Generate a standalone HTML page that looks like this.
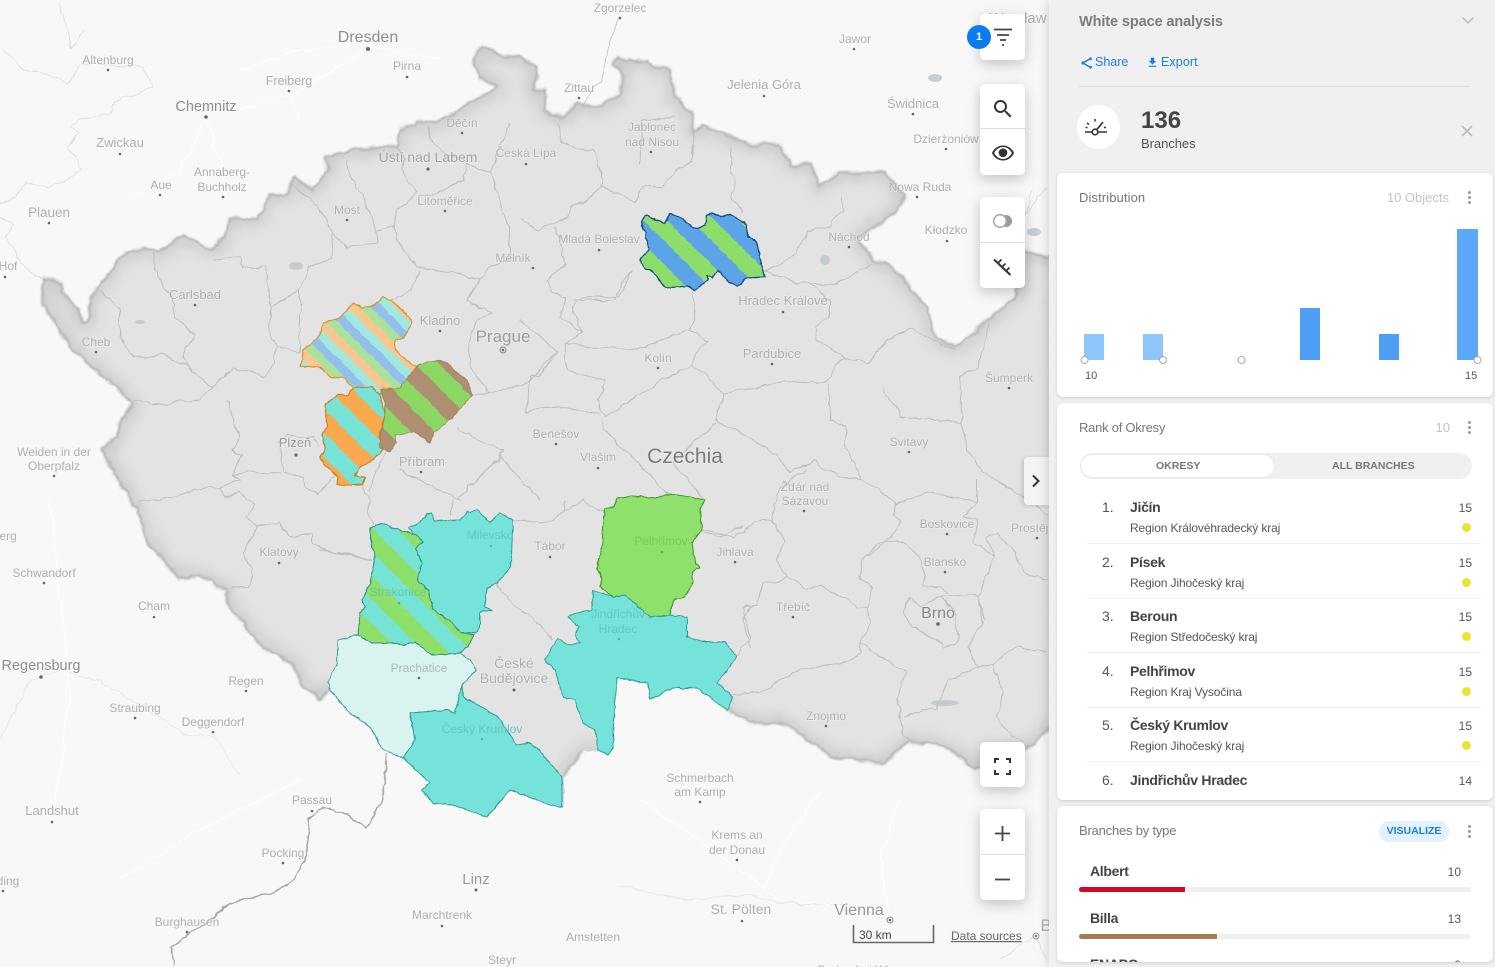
<!DOCTYPE html>
<html><head><meta charset="utf-8"><title>White space analysis</title>
<style>
html,body{margin:0;padding:0;width:1495px;height:967px;overflow:hidden;background:#f8f8f8;font-family:"Liberation Sans",sans-serif}
#map{position:absolute;left:0;top:0}
#map text.l{font-family:"Liberation Sans",sans-serif;fill:#aeaeae;font-size:12px;text-anchor:middle;paint-order:stroke;stroke:rgba(255,255,255,.35);stroke-width:1.5px}
#map circle.d{fill:#666}
.card{position:absolute;background:#fff;border-radius:5px;box-shadow:0 4px 14px rgba(0,0,0,.22)}
.div{position:absolute;left:0;right:0;height:1px;background:#ddd}
.ic{position:absolute}
#panel{position:absolute;left:1049px;top:0;width:446px;height:967px;background:#f0f0f0;box-shadow:-3px 0 8px rgba(0,0,0,.12);overflow:hidden}
#panel .t{position:absolute;white-space:nowrap}
.pc{position:absolute;left:8px;width:436px;background:#fff;border-radius:6px;box-shadow:0 1px 3px rgba(0,0,0,.15);overflow:hidden}
.h{color:#777;font-size:13px;letter-spacing:-.1px}
.num{font-size:14px;color:#555}
.name{font-weight:bold;font-size:14px;color:#444;letter-spacing:-.3px}
.sub{font-size:12px;color:#555;letter-spacing:-.12px}
.val{font-size:12px;color:#555;text-align:right}
.dot{position:absolute;width:9px;height:9px;border-radius:50%;background:#ece52f}
.sep{position:absolute;left:30px;width:394px;height:1px;background:#efefef}
.vd{position:absolute;width:3px;height:3px;border-radius:50%;background:#999;box-shadow:0 5px 0 #999,0 -5px 0 #999}
</style></head><body>
<svg id="map" width="1060" height="967" viewBox="0 0 1060 967">
<defs>
<linearGradient id="gJ" gradientUnits="userSpaceOnUse" x1="647" y1="200" x2="670.75" y2="176.25" spreadMethod="repeat"><stop offset="0" stop-color="#5ba3e8"/><stop offset=".5" stop-color="#5ba3e8"/><stop offset=".5" stop-color="#8ddd6b"/><stop offset="1" stop-color="#8ddd6b"/></linearGradient>
<linearGradient id="gR" gradientUnits="userSpaceOnUse" x1="315.7" y1="300" x2="339.7" y2="276" spreadMethod="repeat"><stop offset="0" stop-color="#93bfed"/><stop offset=".25" stop-color="#93bfed"/><stop offset=".25" stop-color="#a1e8e0"/><stop offset=".5" stop-color="#a1e8e0"/><stop offset=".5" stop-color="#f9c78d"/><stop offset=".75" stop-color="#f9c78d"/><stop offset=".75" stop-color="#a9e39b"/><stop offset="1" stop-color="#a9e39b"/></linearGradient>
<linearGradient id="gB" gradientUnits="userSpaceOnUse" x1="303" y1="300" x2="327" y2="276" spreadMethod="repeat"><stop offset="0" stop-color="#8bd964"/><stop offset=".5" stop-color="#8bd964"/><stop offset=".5" stop-color="#ae8f71"/><stop offset="1" stop-color="#ae8f71"/></linearGradient>
<linearGradient id="gP" gradientUnits="userSpaceOnUse" x1="300" y1="360.7" x2="324" y2="336.7" spreadMethod="repeat"><stop offset="0" stop-color="#f9aa50"/><stop offset=".5" stop-color="#f9aa50"/><stop offset=".5" stop-color="#75e3d6"/><stop offset="1" stop-color="#75e3d6"/></linearGradient>
<linearGradient id="gS" gradientUnits="userSpaceOnUse" x1="300" y1="504" x2="324" y2="480" spreadMethod="repeat"><stop offset="0" stop-color="#75e3d6"/><stop offset=".5" stop-color="#75e3d6"/><stop offset=".5" stop-color="#8ee06a"/><stop offset="1" stop-color="#8ee06a"/></linearGradient>
<filter id="bl" x="-5%" y="-5%" width="110%" height="110%"><feGaussianBlur stdDeviation="7"/></filter>
<filter id="bs" x="-5%" y="-5%" width="110%" height="110%"><feGaussianBlur stdDeviation="1"/></filter>
<filter id="wig" filterUnits="userSpaceOnUse" x="0" y="0" width="1060" height="967"><feTurbulence type="fractalNoise" baseFrequency=".07" numOctaves="3" seed="4" result="n"/><feDisplacementMap in="SourceGraphic" in2="n" scale="7" xChannelSelector="R" yChannelSelector="G"/></filter>
<filter id="wig2" filterUnits="userSpaceOnUse" x="0" y="0" width="1060" height="967"><feTurbulence type="fractalNoise" baseFrequency=".16" numOctaves="2" seed="7" result="n"/><feDisplacementMap in="SourceGraphic" in2="n" scale="3" xChannelSelector="R" yChannelSelector="G"/></filter>
<clipPath id="cz"><path d="M43 278L60 283 62 293 78 307 82 322 88 322 90 300 98 287 117 263 123 253 143 248 160 252 183 235 210 249 225 237 228 218 257 220 270 193 285 195 295 177 312 190 328 170 325 157 350 150 397 145 400 130 417 123 437 123 463 107 498 87 480 77 472 62 480 47 500 55 520 57 537 67 532 90 547 88 544 110 564 118 577 103 601 107 621 93 621 70 613 65 618 57 635 62 648 60 659 68 670 70 675 97 692 113 694 132 703 125 723 135 757 145 779 143 790 165 811 163 819 185 838 172 861 173 885 172 904 197 895 213 858 238 875 262 888 263 927 307 936 337 956 347 976 330 1007 303 1017 297 1022 250 1047 257 1060 257 1060 730 1050 727 1030 747 977 770 950 750 927 742 907 743 883 763 833 758 807 740 783 723 750 723 727 710 697 688 673 688 650 699 648 683 617 678 615 707 613 733 613 748 608 755 598 750 583 750 563 777 562 807 550 805 510 790 487 817 453 805 433 803 422 790 430 783 403 758 383 750 370 727 350 713 330 690 328 693 322 700 302 686 293 664 257 642 227 603 227 590 200 577 177 577 150 545 137 512 127 492 102 451 117 436 120 424 132 404 120 390 93 367 73 350 62 333 42 302Z"/></clipPath>
</defs>
<rect width="1060" height="967" fill="#f8f8f8"/>
<g filter="url(#wig)">
<!-- outside lines -->
<g fill="none" stroke="#e0e0e0" stroke-width="1">
<path d="M3 50L23 70 60 77 68 83 80 63 143 67 152 88 117 100 110 113 80 120 70 127 78 133 68 147 83 170 50 187 25 183 17 197 0 203"/>
<path d="M83 30L72 47 66 30 58 3"/>
<path d="M0 217L13 223 7 240 17 257 33 275 43 278"/>
<path d="M618 17L608 50 599 83 581 107" stroke="#ccc"/>
<path d="M1033 190L1025 215 1047 188"/>
<path d="M0 740L30 680 60 670 100 682 130 700 170 725 185 735 213 735 240 775" stroke="#e8e8e8"/>
<path d="M620 885L680 900 740 895 800 905 850 905 890 920" stroke="#e6e6e6"/>
<path d="M1000 960L1035 935 1048 960"/>
</g>
<g fill="none" stroke="#fff" stroke-width="1" opacity=".9">
<path d="M240 70L300 50 370 45 440 60M206 117L215 150 240 190M206 117L180 170 130 200M289 91L300 120M368 49L300 90 240 110M50 500L60 600 70 700 52 820M120 880L200 830 300 780"/>
<path d="M640 800L700 840 780 900 870 910M820 790L780 850 760 900M900 800L880 860 890 920"/>
</g>
<path d="M387 754L383 798 365 829 347 814 325 807 310 818 307 856 293 881 270 894 233 901 213 917 193 932 172 946 173 964" fill="none" stroke="#aaa" stroke-width="1.5"/>
<!-- Czechia -->
<g clip-path="url(#cz)">
<rect width="1060" height="967" fill="#e3e3e3"/>
<path d="M43 278L60 283 62 293 78 307 82 322 88 322 90 300 98 287 117 263 123 253 143 248 160 252 183 235 210 249 225 237 228 218 257 220 270 193 285 195 295 177 312 190 328 170 325 157 350 150 397 145 400 130 417 123 437 123 463 107 498 87 480 77 472 62 480 47 500 55 520 57 537 67 532 90 547 88 544 110 564 118 577 103 601 107 621 93 621 70 613 65 618 57 635 62 648 60 659 68 670 70 675 97 692 113 694 132 703 125 723 135 757 145 779 143 790 165 811 163 819 185 838 172 861 173 885 172 904 197 895 213 858 238 875 262 888 263 927 307 936 337 956 347 976 330 1007 303 1017 297 1022 250 1047 257 1060 257 1060 730 1050 727 1030 747 977 770 950 750 927 742 907 743 883 763 833 758 807 740 783 723 750 723 727 710 697 688 673 688 650 699 648 683 617 678 615 707 613 733 613 748 608 755 598 750 583 750 563 777 562 807 550 805 510 790 487 817 453 805 433 803 422 790 430 783 403 758 383 750 370 727 350 713 330 690 328 693 322 700 302 686 293 664 257 642 227 603 227 590 200 577 177 577 150 545 137 512 127 492 102 451 117 436 120 424 132 404 120 390 93 367 73 350 62 333 42 302Z" fill="none" stroke="#c8c8c8" stroke-width="12" filter="url(#bl)"/>
</g>
<path d="M43 278L60 283 62 293 78 307 82 322 88 322 90 300 98 287 117 263 123 253 143 248 160 252 183 235 210 249 225 237 228 218 257 220 270 193 285 195 295 177 312 190 328 170 325 157 350 150 397 145 400 130 417 123 437 123 463 107 498 87 480 77 472 62 480 47 500 55 520 57 537 67 532 90 547 88 544 110 564 118 577 103 601 107 621 93 621 70 613 65 618 57 635 62 648 60 659 68 670 70 675 97 692 113 694 132 703 125 723 135 757 145 779 143 790 165 811 163 819 185 838 172 861 173 885 172 904 197 895 213 858 238 875 262 888 263 927 307 936 337 956 347 976 330 1007 303 1017 297 1022 250 1047 257 1060 257 M1060 730L1050 727 1030 747 977 770 950 750 927 742 907 743 883 763 833 758 807 740 783 723 750 723 727 710 M583 750L563 777M330 690L328 693 322 700 302 686 293 664 257 642 227 603 227 590 200 577 177 577 150 545 137 512 127 492 102 451 117 436 120 424 132 404 120 390 93 367 73 350 62 333 42 302 43 278" fill="none" stroke="#a8a8a8" stroke-width="1.8" stroke-linejoin="round" filter="url(#bs)"/>
<!-- okres lines -->
<g fill="none" stroke="#bdbdbd" stroke-width="1" stroke-linejoin="round">
<path d="M100 290L120 310 120 337 135 358 163 355 187 367 213 387 233 368 267 377 278 347 268 330 272 307 268 293 265 267 242 268 240 257 213 260"/>
<path d="M153 253L157 277 173 300 175 317 193 333 183 357 187 367"/>
<path d="M293 187L320 208 333 233 332 258 308 267 300 290 273 307"/>
<path d="M347 160L350 180 362 193 370 213 377 233 378 243 347 248 333 233"/>
<path d="M377 230L395 227 397 210 417 193 403 173 403 157 397 145"/>
<path d="M395 227L397 240 417 267 430 270 467 275 480 280 490 267 510 260 510 227 490 173 497 153 510 123"/>
<path d="M428 127L433 143 465 163 463 180 437 193 417 197M465 163L490 173"/>
<path d="M420 270L410 290 393 300M480 280L467 300 493 313 477 320 467 347 473 370 490 393"/>
<path d="M559 123L562 143 574 147 593 150 601 173 601 187 588 200 571 207 567 217 537 230 520 218"/>
<path d="M601 187L635 202 642 187 662 187 682 167 692 160 694 132M640 163L642 120 675 117M731 147L730 167 736 183 731 197 743 213"/>
<path d="M841 197L843 210 831 227 807 230 797 253 777 267 765 270 794 283 811 283 834 285 872 263"/>
<path d="M811 283L829 300 829 317 816 325 817 340 845 358 868 363 887 340 912 328 939 343 956 350"/>
<path d="M694 290L694 317 689 330 709 340 699 348 692 363 723 393 757 388 784 380 824 383 845 358"/>
<path d="M692 363L682 370 662 380 605 417 598 400 605 380 567 370 564 343 591 347 635 350 689 330"/>
<path d="M574 300L615 300 621 283 633 270M633 270L618 297 581 297 572 310 583 333 564 343M520 322L537 333 557 350 547 367 537 377M555 227L566 263 547 280 550 293 566 297 559 317 583 333"/>
<path d="M723 393L716 420 747 437 777 455 790 473 814 460 838 477 863 480 897 503 893 517 900 523 890 537 863 560 860 580 873 587 867 607 870 623 860 643 907 672 897 697 903 737 907 743"/>
<path d="M828 383L831 420 846 427 845 447 863 480M882 388L902 417 963 423 959 377 978 367 990 320M963 423L966 447 987 477 1015 490 1048 515"/>
<path d="M601 423L611 437 635 460 652 480 670 494M601 413L554 407 527 413 530 377 537 377M716 422L696 440 672 462 705 500"/>
<path d="M770 520L785 543 775 558 787 578 807 587 820 587 843 597 857 607 867 605M787 578L763 583 757 607 743 607 750 637 737 657M700 530L733 537 760 520 770 520 780 490 805 470"/>
<path d="M863 653L843 663 803 668 780 680 763 693 733 695M860 643L863 653"/>
<path d="M903 717L917 712 937 710 947 680 977 668 993 663 1018 647 1047 650M993 663L1003 693 997 717 1013 737 1030 747"/>
<path d="M977 668L968 647 983 623 978 597 993 557 987 537 997 533 1013 550 1023 573 1047 580"/>
<path d="M903 613L910 598 920 608 940 595 977 595 985 620M903 613L913 627 942 643 943 648 957 643 955 613 940 595"/>
<path d="M897 503L927 492 977 502 963 517 977 520 973 543 993 557M977 502L977 480M947 593L940 587 923 587 923 560 907 548 897 540 877 543 863 560"/>
<path d="M227 400L240 436 233 451 243 454 232 476 247 472 280 474M137 501L153 501 200 489 220 487 240 480 232 476M220 487L227 498 240 492 253 505 247 516 257 527 243 552 252 570 250 586 230 588"/>
<path d="M257 527L278 521 290 536 312 532 312 545 343 555 372 559M277 443L287 436 313 436 320 447M280 443L283 472 303 476 307 487 317 494 335 476M362 487L370 494 368 516 373 525"/>
<path d="M133 400L160 404 200 400 213 387M472 395L490 393 528 383 557 350M457 427L483 443 503 450 500 457 470 485 457 500M370 490L387 447M320 550L368 558M453 500L450 517M513 520L547 523 563 513 567 500M547 523L583 500 603 513M497 583L507 600 533 617 553 640M703 533L720 537 743 527M750 607L743 620 750 647M460 500L400 470M500 457L540 500M278 347L300 352 300 290"/>
</g>
</g>
<g fill="#bcc4c8" opacity=".8"><ellipse cx="296" cy="266" rx="7" ry="4"/><ellipse cx="140" cy="322" rx="5" ry="2"/><ellipse cx="945" cy="703" rx="14" ry="3"/><ellipse cx="1034" cy="232" rx="7" ry="4"/><ellipse cx="825" cy="260" rx="5" ry="5"/><ellipse cx="935" cy="78" rx="7" ry="4"/></g>
<!-- regions -->
<g stroke-linejoin="round" filter="url(#wig2)">
<path d="M641 221L646 215 657 220 665 223 670 214 680 217 693 227 698 228 705 225 707 215 712 213 720 217 730 214 747 225 747 235 757 243 760 258 765 277 747 278 737 286 728 282 718 270 712 278 707 275 708 280 695 290 688 286 665 288 658 278 653 272 645 268 639 260 649 250 645 233Z" fill="url(#gJ)" stroke="#14507e" stroke-width="1.3"/>
<path d="M302 350L310 345 320 335 323 323 340 318 353 303 363 308 375 305 383 297 393 302 403 310 412 322 407 333 403 338 395 340 395 348 403 358 418 368 417 375 410 375 408 382 400 390 383 388 380 395 372 388 353 388 345 378 330 377 320 367 308 367 300 367 303 358Z" fill="url(#gR)" stroke="#d9932f" stroke-width="1.2"/>
<path d="M325 405L337 395 348 395 353 388 372 387 380 395 385 413 379 437 383 450 370 462 362 465 355 475 365 477 362 485 337 485 338 477 327 467 320 458 325 450 322 435 327 427Z" fill="url(#gP)" stroke="#c87f1a" stroke-width="1.2"/>
<path d="M408 377L418 365 437 360 447 363 460 375 467 380 472 395 457 413 447 422 435 432 430 443 422 437 413 432 395 435 396 443 390 452 380 448 380 437 385 413 385 402 380 390 400 388Z" fill="url(#gB)" stroke="#9b7d5e" stroke-width=".8"/>
<path d="M338 640L358 635 372 643 392 643 405 645 415 642 432 655 460 653 470 660 476 670 462 685 455 713 448 710 410 713 415 740 403 758 383 750 370 727 350 713 330 690 328 682 337 663Z" fill="#d9f3f1" stroke="#3b9c93" stroke-width="1"/>
<path d="M408 528L420 522 427 515 432 513 435 521 460 520 467 512 477 510 490 522 500 513 513 520 511 567 497 583 487 588 485 607 492 610 480 612 480 627 475 633 460 633 452 623 433 610 428 590 417 580 422 563 415 548 423 542 417 535Z" fill="#75e3d9" stroke="#2f9d93" stroke-width="1"/>
<path d="M370 528L383 523 393 528 407 532 417 535 423 542 415 548 422 563 417 580 428 590 433 610 452 623 460 633 474 635 468 647 460 653 432 655 415 642 405 645 392 643 372 643 358 635 360 613 365 607 362 600 370 583 375 557 370 537Z" fill="url(#gS)" stroke="#2f8f78" stroke-width="1"/>
<path d="M613 507L605 508 603 528 602 547 597 568 602 578 600 587 613 597 625 595 650 617 670 615 673 600 685 597 693 582 692 572 700 568 695 562 692 543 702 530 700 510 705 500 690 497 670 494 655 498 632 496 617 498Z" fill="#8fe06c" stroke="#3f9a28" stroke-width="1.1"/>
<path d="M593 590L613 597 625 595 650 617 670 615 687 617 687 637 703 642 725 642 737 657 717 683 733 697 727 710 697 688 673 688 650 699 648 683 617 678 615 707 613 733 613 748 608 755 598 750 595 730 583 723 575 700 563 697 555 670 545 660 552 647 558 638 568 645 580 643 575 635 578 627 568 617 577 613 592 610Z" fill="#75e3d9" stroke="#2f9d93" stroke-width="1"/>
<path d="M462 685L455 713 448 710 410 713 415 740 403 758 430 783 422 790 433 803 453 805 487 817 510 790 550 805 562 807 562 777 537 748 530 743 517 745 498 717 483 708 463 697Z" fill="#75e3d9" stroke="#2f9d93" stroke-width="1"/>
</g>
<!-- labels -->
<g>
<text class="l" x="368" y="42" style="font-size:16px;fill:#8e8e8e">Dresden</text><circle class="d" cx="368" cy="49" r="2"/>
<text class="l" x="407" y="70">Pirna</text><circle class="d" cx="407" cy="77" r="1.3"/>
<text class="l" x="108" y="64">Altenburg</text><circle class="d" cx="108" cy="70" r="1.3"/>
<text class="l" x="289" y="85" style="font-size:12.5px">Freiberg</text><circle class="d" cx="289" cy="91" r="1.3"/>
<text class="l" x="206" y="111" style="font-size:14.5px;fill:#8e8e8e">Chemnitz</text><circle class="d" cx="206" cy="117" r="1.8"/>
<text class="l" x="120" y="147" style="font-size:13px">Zwickau</text><circle class="d" cx="120" cy="154" r="1.3"/>
<text class="l" x="222" y="176">Annaberg-</text><text class="l" x="222" y="191">Buchholz</text><circle class="d" cx="223" cy="197" r="1.3"/>
<text class="l" x="161" y="189">Aue</text><circle class="d" cx="160" cy="195" r="1.3"/>
<text class="l" x="49" y="217" style="font-size:13.5px">Plauen</text><circle class="d" cx="49" cy="223" r="1.3"/>
<text class="l" x="8" y="270">Hof</text><circle class="d" cx="5" cy="277" r="1.3"/>
<text class="l" x="347" y="214">Most</text><circle class="d" cx="347" cy="220" r="1.3"/>
<text class="l" x="462" y="127">Děčín</text><circle class="d" cx="462" cy="133" r="1.3"/>
<text class="l" x="428" y="162" style="font-size:14px;fill:#a0a0a0">Ústí nad Labem</text><circle class="d" cx="428" cy="169" r="1.6"/>
<text class="l" x="526" y="157">Česká Lípa</text><circle class="d" cx="526" cy="164" r="1.3"/>
<text class="l" x="445" y="205">Litoměřice</text><circle class="d" cx="445" cy="211" r="1.3"/>
<text class="l" x="195" y="299" style="font-size:13px">Carlsbad</text><circle class="d" cx="195" cy="305" r="1.3"/>
<text class="l" x="96" y="346">Cheb</text><circle class="d" cx="96" cy="352" r="1.3"/>
<text class="l" x="440" y="325" style="font-size:13px">Kladno</text><circle class="d" cx="440" cy="331" r="1.3"/>
<text class="l" x="503" y="342" style="font-size:17px;fill:#9a9a9a">Prague</text><circle cx="503" cy="350" r="3" fill="none" stroke="#888"/><circle class="d" cx="503" cy="350" r="1.3"/>
<text class="l" x="513" y="262">Mělník</text><circle class="d" cx="533" cy="268" r="1.3"/>
<text class="l" x="599" y="243">Mladá Boleslav</text><circle class="d" cx="599" cy="250" r="1.3"/>
<text class="l" x="579" y="92">Zittau</text><circle class="d" cx="579" cy="98" r="1.3"/>
<text class="l" x="620" y="12">Zgorzelec</text><circle class="d" cx="620" cy="18" r="1.3"/>
<text class="l" x="855" y="43">Jawor</text><circle class="d" cx="854" cy="49" r="1.3"/>
<text class="l" x="764" y="89" style="font-size:13px">Jelenia Góra</text><circle class="d" cx="764" cy="96" r="1.3"/>
<text class="l" x="913" y="108" style="font-size:13px">Świdnica</text><circle class="d" cx="913" cy="114" r="1.3"/>
<text class="l" x="946" y="143">Dzierżoniów</text><circle class="d" cx="946" cy="149" r="1.3"/>
<text class="l" x="652" y="131">Jablonec</text><text class="l" x="652" y="146">nad Nisou</text><circle class="d" cx="651" cy="152" r="1.3"/>
<text class="l" x="920" y="191">Nowa Ruda</text><circle class="d" cx="917" cy="197" r="1.3"/>
<text class="l" x="946" y="234">Kłodzko</text><circle class="d" cx="947" cy="241" r="1.3"/>
<text class="l" x="849" y="241">Náchod</text><circle class="d" cx="849" cy="247" r="1.3"/>
<text class="l" x="783" y="305" style="font-size:13px">Hradec Králové</text><circle class="d" cx="783" cy="312" r="1.3"/>
<text class="l" x="658" y="362">Kolín</text><circle class="d" cx="658" cy="368" r="1.3"/>
<text class="l" x="772" y="358" style="font-size:13px">Pardubice</text><circle class="d" cx="772" cy="364" r="1.3"/>
<text class="l" x="1009" y="382">Šumperk</text><circle class="d" cx="1009" cy="388" r="1.3"/>
<text class="l" x="909" y="446">Svitavy</text><circle class="d" cx="909" cy="452" r="1.3"/>
<text class="l" x="556" y="438">Benešov</text><circle class="d" cx="556" cy="444" r="1.3"/>
<text class="l" x="598" y="461">Vlašim</text><circle class="d" cx="598" cy="468" r="1.3"/>
<text class="l" x="685" y="463" style="font-size:21px;fill:#7a7a7a">Czechia</text>
<text class="l" x="805" y="491">Žďár nad</text><text class="l" x="805" y="505">Sázavou</text><circle class="d" cx="804" cy="511" r="1.3"/>
<text class="l" x="947" y="528">Boskovice</text><circle class="d" cx="947" cy="534" r="1.3"/>
<text class="l" x="1036" y="532">Prostějov</text><circle class="d" cx="1037" cy="538" r="1.3"/>
<text class="l" x="945" y="566">Blansko</text><circle class="d" cx="945" cy="572" r="1.3"/>
<text class="l" x="735" y="556">Jihlava</text><circle class="d" cx="735" cy="562" r="1.3"/>
<text class="l" x="793" y="611">Třebíč</text><circle class="d" cx="793" cy="617" r="1.3"/>
<text class="l" x="938" y="618" style="font-size:16px;fill:#888">Brno</text><circle class="d" cx="938" cy="624" r="1.8"/>
<text class="l" x="826" y="720">Znojmo</text><circle class="d" cx="826" cy="726" r="1.3"/>
<text class="l" x="700" y="782">Schmerbach</text><text class="l" x="700" y="796">am Kamp</text><circle class="d" cx="700" cy="802" r="1.3"/>
<text class="l" x="737" y="839">Krems an</text><text class="l" x="737" y="854">der Donau</text><circle class="d" cx="737" cy="860" r="1.3"/>
<text class="l" x="741" y="914" style="font-size:14px">St. Pölten</text><circle class="d" cx="742" cy="921" r="1.3"/>
<text class="l" x="859" y="915" style="font-size:16px;fill:#999">Vienna</text><circle cx="890" cy="920" r="3" fill="none" stroke="#888"/><circle class="d" cx="890" cy="920" r="1.3"/>
<text class="l" x="860" y="974">Baden bei Wien</text>
<text class="l" x="593" y="941">Amstetten</text>
<text class="l" x="502" y="964">Steyr</text>
<text class="l" x="476" y="884" style="font-size:15px;fill:#999">Linz</text><circle class="d" cx="476" cy="890" r="1.5"/>
<text class="l" x="442" y="919">Marchtrenk</text><circle class="d" cx="442" cy="926" r="1.3"/>
<text class="l" x="283" y="857">Pocking</text><circle class="d" cx="283" cy="863" r="1.3"/>
<text class="l" x="312" y="804">Passau</text><circle class="d" cx="312" cy="811" r="1.3"/>
<text class="l" x="187" y="926">Burghausen</text><circle class="d" cx="187" cy="932" r="1.3"/>
<text class="l" x="52" y="815" style="font-size:13px">Landshut</text><circle class="d" cx="52" cy="822" r="1.3"/>
<text class="l" x="8" y="885">ding</text><circle class="d" cx="3" cy="891" r="1.3"/>
<text class="l" x="213" y="726">Deggendorf</text><circle class="d" cx="213" cy="732" r="1.3"/>
<text class="l" x="135" y="712">Straubing</text><circle class="d" cx="135" cy="718" r="1.3"/>
<text class="l" x="246" y="685">Regen</text><circle class="d" cx="246" cy="691" r="1.3"/>
<text class="l" x="41" y="670" style="font-size:14.5px;fill:#8e8e8e">Regensburg</text><circle class="d" cx="41" cy="677" r="1.8"/>
<text class="l" x="154" y="610">Cham</text><circle class="d" cx="154" cy="617" r="1.3"/>
<text class="l" x="44" y="577">Schwandorf</text><circle class="d" cx="44" cy="583" r="1.3"/>
<text class="l" x="8" y="540">erg</text>
<text class="l" x="54" y="456">Weiden in der</text><text class="l" x="54" y="470">Oberpfalz</text><circle class="d" cx="54" cy="476" r="1.3"/>
<text class="l" x="295" y="447" style="font-size:13px;fill:#999">Plzeň</text><circle class="d" cx="296" cy="455" r="1.6"/>
<text class="l" x="422" y="466" style="font-size:13px">Příbram</text><circle class="d" cx="421" cy="472" r="1.3"/>
<text class="l" x="279" y="556">Klatovy</text><circle class="d" cx="279" cy="563" r="1.3"/>
<text class="l" x="550" y="550">Tábor</text><circle class="d" cx="550" cy="557" r="1.3"/>
<text class="l" x="490" y="539" style="fill:#5fcabf;stroke:none">Milevsko</text><circle cx="491" cy="546" r="1.3" fill="#4fb8ae"/>
<text class="l" x="661" y="545" style="fill:#78c95a;stroke:none">Pelhřimov</text><circle cx="662" cy="552" r="1.3" fill="#64b048"/>
<text class="l" x="398" y="596" style="fill:#66cb98;stroke:none">Strakonice</text><circle cx="399" cy="603" r="1.3" fill="#4fb08a"/>
<text class="l" x="618" y="618" style="fill:#5fcabf;stroke:none">Jindřichův</text><text class="l" x="618" y="633" style="fill:#5fcabf;stroke:none">Hradec</text><circle cx="619" cy="639" r="1.3" fill="#4fb8ae"/>
<text class="l" x="419" y="672" style="fill:#a9bcbb;stroke:none">Prachatice</text><circle cx="419" cy="678" r="1.3" fill="#666"/>
<text class="l" x="514" y="668" style="font-size:14px">České</text><text class="l" x="514" y="683" style="font-size:14px">Budějovice</text><circle class="d" cx="514" cy="690" r="1.5"/>
<text class="l" x="482" y="733" style="fill:#5fcabf;stroke:none">Český Krumlov</text><circle cx="482" cy="739" r="1.3" fill="#4fb8ae"/>
<text class="l" x="1018" y="23" style="font-size:15px">Wrocław</text>
<text class="l" x="1046" y="931" style="font-size:17px">B</text>
</g>
<!-- scale -->
<path d="M853.5 925V942.5H933.5V925" fill="none" stroke="#666" stroke-width="1.6"/>
<text x="859" y="939" style="font-size:12px;fill:#444;font-family:'Liberation Sans',sans-serif">30 km</text>
<text x="951" y="940" style="font-size:12px;fill:#666;text-decoration:underline;font-family:'Liberation Sans',sans-serif">Data sources</text>
<circle cx="1036" cy="936" r="3" fill="none" stroke="#999"/><circle cx="1036" cy="936" r="1.4" fill="#888"/>
</svg>

<!-- toolbar cards -->
<div class="card" style="left:980px;top:14px;width:45px;height:46px"></div>
<svg class="ic" style="left:993px;top:27px" width="20" height="21" viewBox="0 0 20 21"><path d="M1 2.5H19M4 8H16M7 13H13M9 18H11" stroke="#444" stroke-width="1.7" fill="none"/></svg>
<div style="position:absolute;left:967px;top:25px;width:24px;height:24px;border-radius:50%;background:#0a7cf0;color:#fff;font-size:11px;font-weight:bold;text-align:center;line-height:24px">1</div>
<div class="card" style="left:980px;top:84px;width:45px;height:91px"><div class="div" style="top:44px"></div></div>
<svg class="ic" style="left:991px;top:97px" width="24" height="24" viewBox="0 0 24 24"><path fill="#333" d="M15.5 14h-.79l-.28-.27C15.41 12.59 16 11.11 16 9.5 16 5.91 13.09 3 9.5 3S3 5.91 3 9.5 5.91 16 9.5 16c1.61 0 3.09-.59 4.23-1.57l.27.28v.79l5 4.99L20.49 19l-4.99-5zm-6 0C7.01 14 5 11.99 5 9.5S7.01 5 9.5 5 14 7.01 14 9.5 11.99 14 9.5 14z"/></svg>
<svg class="ic" style="left:991px;top:141px" width="24" height="24" viewBox="0 0 24 24"><path fill="#333" d="M12 4.5C7 4.5 2.73 7.61 1 12c1.73 4.39 6 7.5 11 7.5s9.27-3.11 11-7.5c-1.73-4.39-6-7.5-11-7.5zM12 18c-3.6 0-7-2.3-8.8-6C5 8.3 8.4 6 12 6s7 2.3 8.8 6c-1.8 3.7-5.2 6-8.8 6zm0-10.5c-2.4 0-4.4 1.8-4.4 4.5h8.8c0-2.7-2-4.5-4.4-4.5z"/><circle cx="12" cy="12" r="4.2" fill="#333"/></svg>
<div class="card" style="left:980px;top:197px;width:45px;height:91px"><div class="div" style="top:45px"></div></div>
<svg class="ic" style="left:992px;top:212px" width="22" height="18" viewBox="0 0 22 18"><circle cx="14" cy="9" r="6" fill="#999"/><circle cx="8" cy="9" r="6.3" fill="#fff" stroke="#aaa" stroke-width="1.6"/></svg>
<svg class="ic" style="left:992px;top:256px" width="22" height="22" viewBox="0 0 22 22"><path d="M2 3.5L18.5 19" stroke="#333" stroke-width="2" fill="none"/><path d="M6 7L9.5 3.5M10 11L13.5 7.5M14 15L17.5 11.5" stroke="#333" stroke-width="1.7" fill="none"/></svg>
<div style="position:absolute;left:1024px;top:457px;width:26px;height:48px;background:#f3f3f3;border-radius:4px 0 0 4px;box-shadow:-2px 1px 5px rgba(0,0,0,.15)"></div>
<svg class="ic" style="left:1030px;top:474px" width="12" height="14" viewBox="0 0 12 14"><path d="M3 1.5L8.5 7 3 12.5" stroke="#333" stroke-width="2" fill="none"/></svg>
<div class="card" style="left:980px;top:742px;width:45px;height:45px"></div>
<svg class="ic" style="left:994px;top:758px" width="17" height="17" viewBox="0 0 17 17"><path d="M1 5V1H5M12 1H16V5M16 12V16H12M5 16H1V12" stroke="#333" stroke-width="2" fill="none"/></svg>
<div class="card" style="left:980px;top:809px;width:45px;height:91px"><div class="div" style="top:45px"></div></div>
<svg class="ic" style="left:994px;top:825px" width="17" height="17" viewBox="0 0 17 17"><path d="M8.5 1V16M1 8.5H16" stroke="#444" stroke-width="1.8" fill="none"/></svg>
<svg class="ic" style="left:994px;top:871px" width="17" height="17" viewBox="0 0 17 17"><path d="M1 8.5H16" stroke="#444" stroke-width="1.8" fill="none"/></svg>

<div id="panel">
<div class="t" style="left:30px;top:14px;font-size:14.5px;font-weight:bold;color:#7c7c7c;letter-spacing:-.1px">White space analysis</div>
<svg class="ic" style="left:412px;top:15px" width="14" height="12" viewBox="0 0 14 12"><path d="M1.5 2.5L7 8 12.5 2.5" stroke="#bbb" stroke-width="1.5" fill="none"/></svg>
<svg class="ic" style="left:32px;top:57px" width="11" height="12" viewBox="0 0 11 12"><path d="M9.5 1.5L2 6 9.5 10.5" stroke="#1a7fe0" stroke-width="1.5" fill="none"/><circle cx="2" cy="6" r="1.6" fill="#1a7fe0"/><circle cx="9.5" cy="1.8" r="1.4" fill="#1a7fe0"/><circle cx="9.5" cy="10.2" r="1.4" fill="#1a7fe0"/></svg>
<div class="t" style="left:46px;top:55px;font-size:12.5px;color:#1a7fe0">Share</div>
<svg class="ic" style="left:97px;top:56px" width="13" height="13" viewBox="0 0 24 24"><path fill="#1a7fe0" d="M19 9h-4V3H9v6H5l7 7 7-7zM5 18v2h14v-2H5z"/></svg>
<div class="t" style="left:112px;top:55px;font-size:12.5px;color:#1a7fe0;letter-spacing:.1px">Export</div>
<div style="position:absolute;left:30px;top:86px;width:391px;height:1px;background:#dedede"></div>
<div style="position:absolute;left:28px;top:105px;width:43px;height:44px;border-radius:50%;background:#fff"></div>
<svg class="ic" style="left:35px;top:119px" width="24" height="18" viewBox="0 0 24 18"><path d="M1 13H8M14 13H23" stroke="#333" stroke-width="1.6" fill="none"/><circle cx="11" cy="13" r="2.8" fill="none" stroke="#333" stroke-width="1.6"/><path d="M12.5 11L19 3" stroke="#333" stroke-width="1.7"/><path d="M3 4L5 5.5M11 0V2.5M1.5 8.5H3.5M20 8.5H22" stroke="#333" stroke-width="1.5"/></svg>
<div class="t" style="left:92px;top:107px;font-size:24px;font-weight:bold;color:#444">136</div>
<div class="t" style="left:92px;top:136px;font-size:13px;color:#555;letter-spacing:-.05px">Branches</div>
<svg class="ic" style="left:412px;top:125px" width="12" height="12" viewBox="0 0 12 12"><path d="M1 1L11 11M11 1L1 11" stroke="#bbb" stroke-width="1.6" fill="none"/></svg>

<!-- Distribution -->
<div class="pc" style="top:173px;height:224px">
<div class="t h" style="left:22px;top:17px;letter-spacing:.1px">Distribution</div>
<div class="t" style="right:44px;top:17px;font-size:13px;color:#c4c4c4">10 Objects</div>
<div class="vd" style="left:411px;top:23px"></div>
<svg class="ic" style="left:0;top:0" width="436" height="224">
<rect x="27" y="161" width="20" height="26" fill="#8ec5fb"/>
<rect x="86" y="161" width="20" height="26" fill="#8ec5fb"/>
<rect x="243" y="135" width="20" height="52" fill="#4f9ef5"/>
<rect x="322" y="161" width="20" height="26" fill="#4f9ef5"/>
<rect x="400" y="56" width="21" height="131" fill="#5ba8fb"/>
<g fill="#fff" stroke="#aaa"><circle cx="27.5" cy="187" r="3.5"/><circle cx="106" cy="187" r="3.5"/><circle cx="184.5" cy="187" r="3.5"/><circle cx="420.5" cy="187" r="3.5"/></g>
</svg>
<div class="t" style="left:28px;top:197px;font-size:11px;color:#555">10</div>
<div class="t" style="left:408px;top:197px;font-size:11px;color:#555">15</div>
</div>

<!-- Rank -->
<div class="pc" style="top:403px;height:397px">
<div class="t h" style="left:22px;top:17px;letter-spacing:-.25px">Rank of Okresy</div>
<div class="t" style="right:43px;top:17px;font-size:13px;color:#c4c4c4">10</div>
<div class="vd" style="left:411px;top:23px"></div>
<div style="position:absolute;left:23px;top:50px;width:392px;height:26px;border-radius:13px;background:#f0f0f0"></div>
<div style="position:absolute;left:24px;top:52px;width:193px;height:22px;border-radius:11px;background:#fff;box-shadow:0 0 2px rgba(0,0,0,.1)"></div>
<div class="t" style="left:99px;top:57px;font-size:10.5px;font-weight:bold;color:#777">OKRESY</div>
<div class="t" style="left:275px;top:57px;font-size:10.5px;font-weight:bold;color:#777">ALL BRANCHES</div>

<div class="t num" style="left:45px;top:96px">1.</div><div class="t name" style="left:73px;top:96px">Jičín</div><div class="t val" style="right:21px;top:98px">15</div><div class="t sub" style="left:73px;top:118px">Region Královéhradecký kraj</div><div class="dot" style="left:405px;top:120px"></div><div class="sep" style="top:140px"></div>
<div class="t num" style="left:45px;top:151px">2.</div><div class="t name" style="left:73px;top:151px">Písek</div><div class="t val" style="right:21px;top:153px">15</div><div class="t sub" style="left:73px;top:173px">Region Jihočeský kraj</div><div class="dot" style="left:405px;top:175px"></div><div class="sep" style="top:195px"></div>
<div class="t num" style="left:45px;top:205px">3.</div><div class="t name" style="left:73px;top:205px">Beroun</div><div class="t val" style="right:21px;top:207px">15</div><div class="t sub" style="left:73px;top:227px">Region Středočeský kraj</div><div class="dot" style="left:405px;top:229px"></div><div class="sep" style="top:249px"></div>
<div class="t num" style="left:45px;top:260px">4.</div><div class="t name" style="left:73px;top:260px">Pelhřimov</div><div class="t val" style="right:21px;top:262px">15</div><div class="t sub" style="left:73px;top:282px">Region Kraj Vysočina</div><div class="dot" style="left:405px;top:284px"></div><div class="sep" style="top:304px"></div>
<div class="t num" style="left:45px;top:314px">5.</div><div class="t name" style="left:73px;top:314px">Český Krumlov</div><div class="t val" style="right:21px;top:316px">15</div><div class="t sub" style="left:73px;top:336px">Region Jihočeský kraj</div><div class="dot" style="left:405px;top:338px"></div><div class="sep" style="top:358px"></div>
<div class="t num" style="left:45px;top:369px">6.</div><div class="t name" style="left:73px;top:369px">Jindřichův Hradec</div><div class="t val" style="right:21px;top:371px">14</div>
</div>

<!-- Branches -->
<div class="pc" style="top:806px;height:156px">
<div class="t h" style="left:22px;top:17px;letter-spacing:-.2px">Branches by type</div>
<div style="position:absolute;left:322px;top:15px;width:70px;height:21px;border-radius:11px;background:#e3f0fd;color:#1a7fe0;font-size:10.5px;font-weight:bold;text-align:center;line-height:21px">VISUALIZE</div>
<div class="vd" style="left:411px;top:24px"></div>
<div class="t name" style="left:33px;top:57px;color:#444">Albert</div><div class="t val" style="right:32px;top:59px">10</div>
<div style="position:absolute;left:22px;top:81px;width:392px;height:5px;border-radius:3px;background:#efefef"><div style="width:106px;height:5px;border-radius:3px 0 0 3px;background:#cf0a22"></div></div>
<div class="t name" style="left:33px;top:104px;color:#444">Billa</div><div class="t val" style="right:32px;top:106px">13</div>
<div style="position:absolute;left:22px;top:128px;width:392px;height:5px;border-radius:3px;background:#efefef"><div style="width:138px;height:5px;border-radius:3px 0 0 3px;background:#a87a50"></div></div>
<div class="t name" style="left:33px;top:150px;color:#444">ENAPO</div><div class="t val" style="right:32px;top:152px">9</div>
</div>
</div>
</body></html>
